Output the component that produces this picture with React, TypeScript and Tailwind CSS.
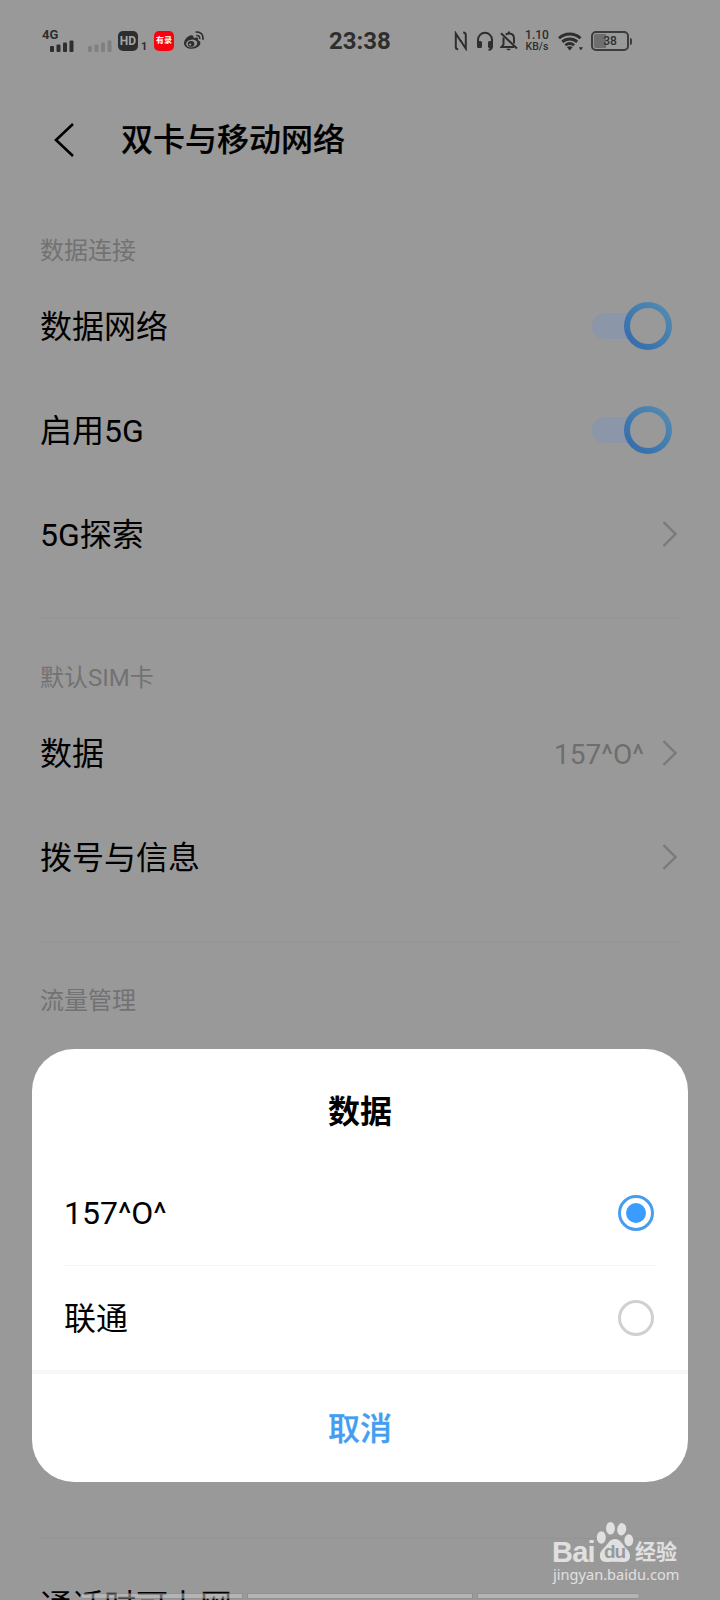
import { useState } from 'react';
import type { ReactNode } from 'react';

const SIM_OPTIONS = ['157^O^', '联通'];

function SignalBars({ className }: { className: string }) {
  return (
    <svg width="24" height="12" viewBox="0 0 24 12" fill="currentColor" className={className}>
      <rect x="0" y="6" width="4" height="6" rx="1" />
      <rect x="6.5" y="4.5" width="4" height="7.5" rx="1" />
      <rect x="13" y="2.5" width="4" height="9.5" rx="1" />
      <rect x="19.5" y="0.5" width="4" height="11.5" rx="1" />
    </svg>
  );
}

function WeiboIcon() {
  return (
    <svg width="22" height="20" viewBox="0 0 22 20" fill="none" stroke="currentColor">
      <path
        d="M8.2 4.2C5 4.6 1 8.6 1 12.2c0 3.2 3.5 5.6 7.8 5.6 5.1 0 8.6-3 8.6-5.7 0-1.8-1.3-2.5-2.5-2.9.5-1.6.1-2.4-1-2.6-1-.2-2.2.1-3.4.5.3-1.7-.3-3.1-2.3-2.900Z"
        fill="currentColor"
        stroke="none"
      />
      <ellipse cx="8.7" cy="12.5" rx="5.6" ry="3.9" transform="rotate(-8 8.7 12.5)" fill="#999" stroke="none" />
      <ellipse cx="8.1" cy="12.9" rx="3.3" ry="2.8" fill="currentColor" stroke="none" />
      <circle cx="7.2" cy="13.5" r="1.1" fill="#999" stroke="none" />
      <path d="M13.3 4.6c2.3-.4 3.9 1.3 3.4 3.5" strokeWidth="1.5" />
      <path d="M12.7 1.2c4.7-1 8.3 2.7 7 7.6" strokeWidth="1.7" />
    </svg>
  );
}

function NfcIcon() {
  return (
    <svg width="14" height="20" viewBox="0 0 14 20" fill="none" stroke="currentColor" strokeWidth="2">
      <path d="M4.2 18.2C2.4 18.200 1.800 17.600 1.800 16V2.500L7 10.500" />
      <path d="M9.200 1.500C11 1.500 11.800 2.200 11.800 4V17.500L6.500 9.500" />
    </svg>
  );
}

function HeadsetIcon() {
  return (
    <svg width="18" height="20" viewBox="0 0 18 20" fill="none" stroke="currentColor">
      <path d="M2 13V8.8a7 7 0 0 1 14 0V15c0 2.5-1.3 3.8-3.5 3.8" strokeWidth="2" />
      <rect x="1" y="10" width="5" height="7" rx="1.5" fill="currentColor" stroke="none" />
      <rect x="12" y="10" width="5" height="7" rx="1.5" fill="currentColor" stroke="none" />
    </svg>
  );
}

function BellOffIcon() {
  return (
    <svg width="18" height="20" viewBox="0 0 18 20" fill="none" stroke="currentColor" strokeWidth="2">
      <path d="M1 2.2 17 17.5" />
      <path d="M3.5 6.5v7L1.5 16H14" />
      <path d="M5.8 3.6C6.6 3 7.6 2.6 9 2.6c3.3 0 5 2.2 5 5.2v4.7" />
      <path d="M9 .4v2" />
      <path d="M6.5 17.7h4.2c-.4 2-3.800 2-4.200 0Z" fill="currentColor" stroke="none" />
    </svg>
  );
}

function WifiIcon() {
  return (
    <svg width="25" height="19" viewBox="0 0 25 19" fill="none" stroke="currentColor" strokeWidth="2.8">
      <path d="M1 6.2c6-5.6 15.5-5.6 21.5 0" />
      <path d="M4.3 9.9c4.3-3.9 10.6-3.9 14.9 0" />
      <path d="M7.4 13.3c2.6-2.2 6.1-2.2 8.7 0" />
      <path d="M8.9 15.2c1.7-1.4 4-1.4 5.7 0L11.7 18.6Z" fill="currentColor" stroke="none" />
      <path d="M20.8 15.2h4.2L22.9 18.4Z" fill="currentColor" stroke="none" />
    </svg>
  );
}

function BatteryIcon() {
  return (
    <div className="flex items-center">
      <div className="relative flex h-5 w-[38px] items-center justify-center overflow-hidden rounded-[5px] border-2 border-[#3c3c3c]">
        <span className="absolute left-px top-px h-[14px] w-[12px] rounded-l-[2px] bg-[#6e6e6e]" />
        <span className="relative text-[12px] font-medium leading-none">38</span>
      </div>
      <span className="ml-px h-[7px] w-[1.5px] rounded-r bg-[#3c3c3c]" />
    </div>
  );
}

function StatusBar() {
  return (
    <div className="relative flex h-[82px] shrink-0 items-center text-[#2e2e2e]">
      <div className="ml-[42px] h-[23px] w-[32px]">
        <div className="text-[13px] font-bold leading-[10px]">4G</div>
        <SignalBars className="ml-2" />
      </div>
      <SignalBars className="ml-[14px] mt-[9px] text-[#808080]" />
      <div className="ml-[6px] flex h-5 w-5 items-center justify-center rounded-[5px] bg-[#2e2e2e] text-[12px] font-bold leading-none text-[#a5a5a5]">
        HD
      </div>
      <span className="ml-[3px] mt-[11px] w-[4px] text-[11px] font-bold leading-none">1</span>
      <div className="ml-[9px] flex h-5 w-5 items-center justify-center rounded-[5px] bg-[#fb000c] text-[8px] font-bold leading-none text-white">
        有录
      </div>
      <div className="ml-[9px]">
        <WeiboIcon />
      </div>
      <div className="absolute left-[329px] text-[24px] font-bold leading-none">23:38</div>
      <div className="ml-[249px] flex items-center">
        <NfcIcon />
        <div className="ml-2">
          <HeadsetIcon />
        </div>
        <div className="ml-[6px]">
          <BellOffIcon />
        </div>
        <div className="ml-[7px] w-[24px] text-center text-[10.5px] font-medium leading-[11px]">
          <div className="text-[12px]">1.10</div>
          <div>KB/s</div>
        </div>
        <div className="ml-[9px]">
          <WifiIcon />
        </div>
        <div className="ml-[8px]">
          <BatteryIcon />
        </div>
      </div>
    </div>
  );
}

function Toggle() {
  return (
    <div className="relative mr-2 flex h-12 w-20 items-center">
      <div className="h-[26px] w-16 rounded-full bg-[#8b96a9]" />
      <div className="absolute right-0 h-12 w-12 rounded-full bg-linear-to-tr from-[#3069ac] to-[#568eb0] p-[6px]">
        <div className="h-full w-full rounded-full bg-[#999]" />
      </div>
    </div>
  );
}

function Chevron() {
  return (
    <svg width="16" height="28" viewBox="0 0 16 28" fill="none" stroke="#7a7a7a" strokeWidth="2.4" className="mr-[2px]">
      <path d="M1.5 2 13.5 14 1.5 26" />
    </svg>
  );
}

function SectionLabel({ children }: { children: ReactNode }) {
  return <h2 className="flex h-12 shrink-0 items-center pt-[2px] text-[24px] leading-none text-[#727272]">{children}</h2>;
}

function Row({ label, value, children }: { label: string; value?: string; children?: ReactNode }) {
  return (
    <div className="flex h-[104px] shrink-0 items-center">
      <span className="pt-[2px] text-[32px] leading-none">{label}</span>
      <div className="ml-auto flex items-center">
        {value && <span className="mr-[18px] pt-[3px] text-[28px] leading-none text-[#6e6e6e]">{value}</span>}
        {children}
      </div>
    </div>
  );
}

function Divider() {
  return <div className="mt-8 mb-[34px] h-px shrink-0 bg-[#949494]" />;
}

function DataSimDialog() {
  const [selected, setSelected] = useState(0);

  return (
    <div className="absolute inset-x-8 top-[1049px] flex h-[433px] flex-col overflow-hidden rounded-[42px] bg-white">
      <h3 className="flex h-[111px] items-center justify-center pt-[15px] text-[32px] font-bold leading-none">数据</h3>
      <div className="flex flex-col px-8">
        {SIM_OPTIONS.map((name, index) => (
          <button
            key={name}
            className={`flex items-center justify-between pr-[2px] text-[32px] leading-none ${
              index === 0 ? 'h-[106px] border-b border-[#f6f6f6]' : 'h-[104px]'
            }`}
            onClick={() => setSelected(index)}
          >
            <span className="pt-px">{name}</span>
            <span
              className={`flex h-9 w-9 items-center justify-center rounded-full border-3 ${
                selected === index ? 'border-[#4a9ded]' : 'border-[#d0d0d0]'
              }`}
            >
              {selected === index && <span className="h-5 w-5 rounded-full bg-[#3b9cff]" />}
            </span>
          </button>
        ))}
      </div>
      <div className="h-1 shrink-0 bg-[#f7f7f7]" />
      <button className="flex flex-1 items-center justify-center pt-[2px] text-[32px] font-medium leading-none text-[#459df0] [-webkit-text-stroke:0.3px]">
        取消
      </button>
    </div>
  );
}

function Watermark() {
  return (
    <div className="absolute left-[552px] top-[1521px] flex h-[66px] w-[130px] flex-col text-[#e0e0e0]">
      <div className="relative flex h-[46px] items-start">
        <span className="mt-[17px] w-[43px] font-['Liberation_Sans'] text-[29px] font-bold leading-[29px] tracking-[-0.8px]">
          Bai
        </span>
        <div className="relative h-[46px] w-10">
          <svg width="40" height="46" viewBox="0 0 40 46" fill="currentColor">
            <ellipse cx="6.3" cy="16.5" rx="4.5" ry="6.2" />
            <ellipse cx="15.5" cy="7.3" rx="4.4" ry="6.3" />
            <ellipse cx="26.7" cy="8.3" rx="4.5" ry="6.2" transform="rotate(8 26.7 8.3)" />
            <ellipse cx="33.8" cy="19.3" rx="4.4" ry="6" />
            <path d="M20 18c-6 0-7.5 6-11.5 9.5C5.5 30 4.5 33 5 36c.7 4.2 4 5.3 8 5 5-.4 9-.4 14 0 4 .3 7.5-1 8-5 .4-3-1-5.800-3.800-8.500C27 23.500 26 18 20 18Z" />
          </svg>
          <span className="absolute left-[9px] top-[21px] font-['Liberation_Sans'] text-[19px] font-bold leading-5 tracking-[-1px] text-[#999]">
            du
          </span>
        </div>
        <span className="mt-[20px] whitespace-nowrap text-[21px] font-bold leading-[22px]">经验</span>
      </div>
      <span className="-mt-[2px] ml-px whitespace-nowrap font-['Noto_Sans'] text-[14.6px] leading-[18px]">
        jingyan.baidu.com
      </span>
    </div>
  );
}

export default function App() {
  return (
    <div className="relative flex h-[1600px] w-[720px] flex-col overflow-hidden bg-[#999] font-['Roboto','Noto_Sans_CJK_SC',sans-serif] text-black">
      <StatusBar />

      <header className="flex h-[114px] shrink-0 items-center pt-px">
        <svg width="22" height="36" viewBox="0 0 22 36" fill="none" stroke="currentColor" strokeWidth="2.6" className="ml-[53px] mt-px">
          <path d="M20 2 3 18 20 34" />
        </svg>
        <h1 className="ml-[46px] text-[32px] font-medium leading-none [-webkit-text-stroke:0.2px]">双卡与移动网络</h1>
      </header>

      <main className="flex flex-col px-10 pt-[30px]">
        <SectionLabel>数据连接</SectionLabel>
        <Row label="数据网络">
          <Toggle />
        </Row>
        <Row label="启用5G">
          <Toggle />
        </Row>
        <Row label="5G探索">
          <Chevron />
        </Row>
        <Divider />

        <SectionLabel>默认SIM卡</SectionLabel>
        <Row label="数据" value="157^O^">
          <Chevron />
        </Row>
        <Row label="拨号与信息">
          <Chevron />
        </Row>
        <Divider />

        <SectionLabel>流量管理</SectionLabel>
        {/* rows of this section sit behind the dialog */}
        <div className="h-[482px] shrink-0" />
        <div className="mt-8 mb-[14px] h-px shrink-0 bg-[#949494]" />
        <Row label="通话时可上网" />
      </main>

      <DataSimDialog />

      {/* Gesture navigation bars */}
      <div className="absolute left-20 top-[1593px] flex h-[6px] w-[560px] gap-1 opacity-50">
        <div className="flex-1 rounded-l-full border border-[#8a8a8a] bg-[#d0d0d0]" />
        <div className="w-[226px] border border-[#8a8a8a] bg-[#d0d0d0]" />
        <div className="flex-1 rounded-r-full border border-[#8a8a8a] bg-[#d0d0d0]" />
      </div>

      <Watermark />
    </div>
  );
}
